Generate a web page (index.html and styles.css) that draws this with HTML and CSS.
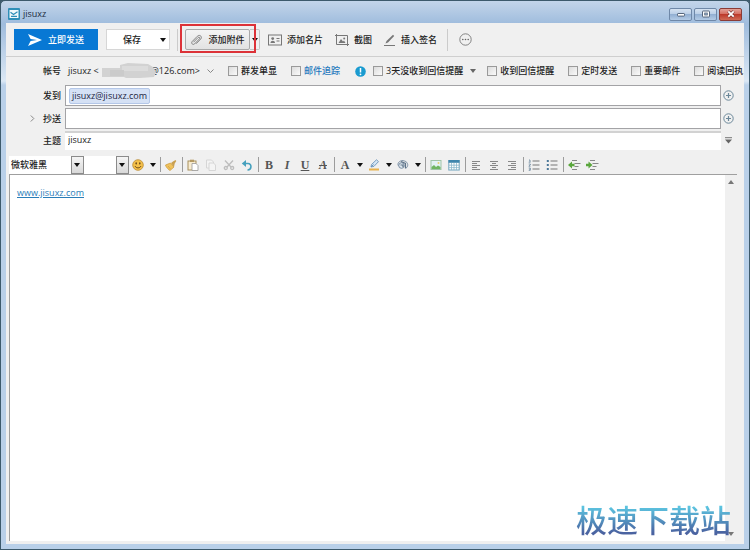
FILE: index.html
```html
<!DOCTYPE html>
<html lang="zh-CN">
<head>
    <meta charset="UTF-8">
    <title>jisuxz</title>
    <meta name="viewport" content="width=device-width, initial-scale=1">
    <link rel="stylesheet" href="styles.css">
</head>
<body>
    <div class="window">
        <header class="titlebar">
            <svg class="app-icon" width="12" height="12" viewBox="0 0 12 12">
                <rect width="12" height="12" rx="1" fill="#2f8fb8"/>
                <rect x="1.5" y="2" width="9" height="8" fill="#f2fafc"/>
                <path d="M2.5 4.2l3 2.3 4-2.8M3 8.4h6" fill="none" stroke="#2f8fb8" stroke-width="1.2"/>
            </svg>
            <h1>jisuxz</h1>
            <div class="win-buttons">
                <button class="win-btn" aria-label="最小化"><svg width="10" height="8" viewBox="0 0 10 8"><rect x="1.5" y="3.5" width="7" height="2.6" rx=".6" fill="#fff" stroke="#56667c"/></svg></button>
                <button class="win-btn" aria-label="最大化"><svg width="10" height="8" viewBox="0 0 10 8"><rect x="1.5" y="1" width="7" height="6" rx=".6" fill="#fff" stroke="#56667c"/><rect x="3.7" y="3" width="2.6" height="2" fill="#9db6d4" stroke="#56667c" stroke-width=".8"/></svg></button>
                <button class="win-btn close" aria-label="关闭"><svg width="10" height="8" viewBox="0 0 10 8"><path d="M2.3 1.3l5.4 5.4M7.7 1.3L2.3 6.7" stroke="#6b2a2a" stroke-width="3"/><path d="M2.3 1.3l5.4 5.4M7.7 1.3L2.3 6.7" stroke="#fff" stroke-width="1.9"/></svg></button>
            </div>
        </header>

        <main class="client">
            <div class="toolbar">
                <button class="btn-send">
                    <svg width="14" height="12" viewBox="0 0 14 12"><path d="M0 0l14 6-14 6 2.6-5L9 6 2.6 5z" fill="#fff"/></svg>
                    立即发送
                </button>
                <button class="btn-save"><span>保存</span><i class="caret"></i></button>
                <span class="tsep"></span>
                <div class="attach">
                    <button class="btn-attach">
                        <svg width="12" height="12" viewBox="0 0 12 12"><path d="M3.5 8.2l4.6-4.7c1-1 2.3.3 1.4 1.3L4.6 9.9C3 11.5.6 9.2 2.2 7.5l5.1-5.2C9.7-.1 12.8 2.8 10.6 5.2L6.2 9.7" fill="none" stroke="#777" stroke-width=".9"/></svg>
                        添加附件
                    </button>
                    <button class="btn-split" aria-label="更多附件"><i class="caret"></i></button>
                </div>
                <button class="tool">
                    <svg width="14" height="12" viewBox="0 0 14 12" fill="none" stroke="#777"><rect x=".5" y="1" width="13" height="10"/><path d="M8.5 4.5h3M8.5 7h3"/><path d="M2.5 9c0-3 4.5-3 4.5 0z" fill="#777" stroke="none"/><circle cx="4.7" cy="4.6" r="1.4" fill="#777" stroke="none"/></svg>
                    添加名片
                </button>
                <button class="tool">
                    <svg width="14" height="12" viewBox="0 0 14 12" fill="none" stroke="#777"><path d="M1.5 0v10.5H14M0 1.5h12.5V12"/><path d="M3.5 9l2.5-4 2 2.5 1-1 1.5 2.5z" fill="#777" stroke="none"/><circle cx="9.2" cy="4.5" r="1" fill="#777" stroke="none"/></svg>
                    截图
                </button>
                <button class="tool">
                    <svg width="12" height="12" viewBox="0 0 12 12" fill="none" stroke="#777"><path d="M0 11.5h11"/><path d="M1.5 9.5l1-2.5L9 .8l1.2 1.2L4 8.5z" fill="#777" stroke="none"/></svg>
                    插入签名
                </button>
                <span class="tsep"></span>
                <button class="tool" aria-label="更多">
                    <svg width="13" height="13" viewBox="0 0 13 13"><circle cx="6.5" cy="6.5" r="5.7" fill="none" stroke="#777" stroke-width=".9"/><g fill="#666"><circle cx="3.8" cy="6.5" r=".8"/><circle cx="6.5" cy="6.5" r=".8"/><circle cx="9.2" cy="6.5" r=".8"/></g></svg>
                </button>
            </div>

            <div class="options">
                <span class="row-label">帐号</span>
                <button class="account">
                    <span>jisuxz &lt;</span>
                    <svg class="blob" width="56" height="18" viewBox="0 0 56 18"><path d="M0 6h18V3l8-2 20 1 5 3 3 5-2 5-14 1H24l-2-1H0z" fill="#d2d2d2"/><path d="M20 4h26v5H20z" fill="#dcdcdc"/><path d="M8 8h14v6H8z" fill="#cbcbcb"/></svg>
                    <span>@126.com&gt;</span>
                    <svg class="chev" width="7" height="5" viewBox="0 0 7 5"><path d="M.5.5l3 3 3-3" fill="none" stroke="#888"/></svg>
                </button>
                <label class="check"><input type="checkbox">群发单显</label>
                <label class="check track"><input type="checkbox">邮件追踪</label>
                <svg class="info" width="11" height="11" viewBox="0 0 11 11"><circle cx="5.5" cy="5.5" r="5.3" fill="#1a9bd0"/><path d="M5.5 2v4.5" stroke="#fff" stroke-width="1.5"/><circle cx="5.5" cy="8.3" r=".9" fill="#fff"/></svg>
                <label class="check remind"><input type="checkbox">3天没收到回信提醒</label>
                <i class="caret soft"></i>
                <label class="check"><input type="checkbox">收到回信提醒</label>
                <label class="check"><input type="checkbox">定时发送</label>
                <label class="check"><input type="checkbox">重要邮件</label>
                <label class="check"><input type="checkbox">阅读回执</label>
            </div>

            <div class="fields">
                <div class="field">
                    <label class="row-label" for="to">发到</label>
                    <div class="box">
                        <span class="chip">jisuxz@jisuxz.com</span>
                        <input id="to" type="text">
                    </div>
                    <button class="side" aria-label="添加收件人"><svg width="11" height="11" viewBox="0 0 11 11" fill="none" stroke="#6b8799"><circle cx="5.5" cy="5.5" r="4.7"/><path d="M5.5 3v5M3 5.5h5" stroke-width="1.2"/></svg></button>
                </div>
                <div class="field">
                    <label class="row-label" for="cc"><svg width="5" height="7" viewBox="0 0 5 7"><path d="M.8.5l3 3-3 3" fill="none" stroke="#888"/></svg>抄送</label>
                    <div class="box"><input id="cc" type="text"></div>
                    <button class="side" aria-label="添加抄送人"><svg width="11" height="11" viewBox="0 0 11 11" fill="none" stroke="#6b8799"><circle cx="5.5" cy="5.5" r="4.7"/><path d="M5.5 3v5M3 5.5h5" stroke-width="1.2"/></svg></button>
                </div>
                <div class="field subject">
                    <label class="row-label" for="subject">主题</label>
                    <div class="box"><input id="subject" type="text" value="jisuxz"></div>
                    <button class="side" aria-label="展开"><svg width="9" height="7" viewBox="0 0 9 7"><path d="M1 .7h7" stroke="#777"/><path d="M1 2.5h7L4.5 6.5z" fill="#666"/></svg></button>
                </div>
            </div>

            <div class="format-bar">
                <span class="combo font"><select aria-label="字体"><option>微软雅黑</option></select></span>
                <span class="combo size"><select aria-label="字号"><option></option></select></span>
                <button class="fmt" aria-label="表情"><svg width="12" height="12" viewBox="0 0 12 12"><circle cx="6" cy="6" r="5.3" fill="#f4c04a" stroke="#b98a35" stroke-width=".8"/><ellipse cx="4.2" cy="4.4" rx=".8" ry="1.1" fill="#6b4a1a"/><ellipse cx="7.8" cy="4.4" rx=".8" ry="1.1" fill="#6b4a1a"/><path d="M3 7c1 2.5 5 2.5 6 0" fill="none" stroke="#6b4a1a"/></svg></button>
                <button class="drop" aria-label="更多表情"><i class="caret"></i></button>
                <span class="fsep"></span>
                <button class="fmt" aria-label="格式刷"><svg width="12" height="12" viewBox="0 0 12 12"><path d="M.5 6l5-2 3.5 4-4 3.5c-1-.5-4-3-4.5-5.5z" fill="#f0c35c" stroke="#c9963a" stroke-width=".7"/><path d="M6 4l2-1.5L10.5 1l.8 1-1.6 2.5L9 8z" fill="#c9a050"/><path d="M3 7l2.5 3" stroke="#c9963a" stroke-width=".6"/></svg></button>
                <span class="fsep"></span>
                <button class="fmt" aria-label="粘贴"><svg width="12" height="12" viewBox="0 0 12 12"><rect x="1" y="2" width="8" height="9" fill="#f8ecd0" stroke="#a8905c"/><rect x="3" y=".7" width="4" height="2.3" fill="#b59a62"/><path d="M5 4.5h4l2 2v5H5z" fill="#fff" stroke="#999" stroke-width=".8"/></svg></button>
                <button class="fmt" aria-label="复制"><svg width="12" height="12" viewBox="0 0 12 12" fill="#f4f4f4" stroke="#d6d6d6"><path d="M1.5 1h5l2 2v6h-7z"/><path d="M4 4h4.5l2 2v5.5H4z"/></svg></button>
                <button class="fmt" aria-label="剪切"><svg width="12" height="12" viewBox="0 0 12 12" fill="none" stroke="#bdbdbd" stroke-width="1.3"><path d="M2 1.5l6 6.5M10 1.5L4 8"/><circle cx="2.8" cy="9" r="1.5"/><circle cx="9.2" cy="9" r="1.5"/></svg></button>
                <button class="fmt" aria-label="撤销"><svg width="12" height="12" viewBox="0 0 12 12"><path d="M3 4.5h4c4 0 4 6.5-.5 6.5" fill="none" stroke="#45a0bd" stroke-width="1.6"/><path d="M.8 4.5L5 1v7z" fill="#45a0bd"/></svg></button>
                <span class="fsep"></span>
                <button class="fmt letter bold">B</button>
                <button class="fmt letter italic">I</button>
                <button class="fmt letter under">U</button>
                <button class="fmt letter strike">A</button>
                <span class="fsep"></span>
                <button class="fmt letter color">A</button>
                <button class="drop" aria-label="文字颜色"><i class="caret"></i></button>
                <button class="fmt" aria-label="突出显示"><svg width="12" height="12" viewBox="0 0 12 12"><path d="M3 8l.5-2.5L8.5.8l2 1.8L6 7.3z" fill="#d5e6f5" stroke="#6c94ba" stroke-width=".9"/><path d="M3 8l2.5-2.5" stroke="#6c94ba"/><path d="M1 10.5h10" stroke="#e9b24c" stroke-width="2"/></svg></button>
                <button class="drop" aria-label="突出显示颜色"><i class="caret"></i></button>
                <button class="fmt" aria-label="背景"><svg width="12" height="12" viewBox="0 0 12 12" fill="none" stroke="#778ca2"><path d="M1.5 7C-.5 3.5 4 .5 7.5 2c4 1 4 6 1.5 7"/><circle cx="4.5" cy="6.5" r="2.8" fill="#dfe8ef"/><path d="M4 2.5l4.5 2v5M3.5 6h2.5v2" stroke="#5e7388" stroke-width="1.2"/></svg></button>
                <button class="drop" aria-label="背景颜色"><i class="caret"></i></button>
                <span class="fsep"></span>
                <button class="fmt" aria-label="图片"><svg width="12" height="12" viewBox="0 0 12 12"><rect x="1" y="1.5" width="10" height="9" fill="#e3f2f5" stroke="#9fc4a8"/><path d="M1.5 10V8l2.5-2 2 2 2-1.5 2.5 1.5v2z" fill="#6fb662"/><circle cx="8.5" cy="4" r="1" fill="#e6cf6a"/></svg></button>
                <button class="fmt" aria-label="表格"><svg width="12" height="12" viewBox="0 0 12 12"><rect x=".8" y="1.5" width="10.4" height="9.5" fill="#fff" stroke="#6fa3bd"/><path d="M.5 1h11v2.8H.5z" fill="#3f86ad"/><path d="M1 6.2h10M1 8.6h10M3.5 4v7M6 4v7M8.5 4v7" stroke="#8ab8cc" stroke-width=".8"/></svg></button>
                <span class="fsep"></span>
                <button class="fmt" aria-label="左对齐"><svg width="10" height="10" viewBox="0 0 10 10"><path d="M1 1.5h8M1 3.5h5M1 5.5h8M1 7.5h5M1 9.5h8" stroke="#888"/></svg></button>
                <button class="fmt" aria-label="居中"><svg width="10" height="10" viewBox="0 0 10 10"><path d="M1 1.5h8M3 3.5h4M1 5.5h8M3 7.5h4M1 9.5h8" stroke="#888"/></svg></button>
                <button class="fmt" aria-label="右对齐"><svg width="10" height="10" viewBox="0 0 10 10"><path d="M1 1.5h8M4 3.5h5M1 5.5h8M4 7.5h5M1 9.5h8" stroke="#888"/></svg></button>
                <span class="fsep"></span>
                <button class="fmt" aria-label="编号列表"><svg width="12" height="12" viewBox="0 0 12 12"><path d="M4.5 2h7M4.5 6h7M4.5 10h7" stroke="#777" stroke-width="1.2"/><path d="M1 1h1v2M.7 3.2h1.8M.7 5h1.6v1L.8 7.2h1.7M.7 9h1.6v2.3H.7M1.2 10.2h1" fill="none" stroke="#66839a" stroke-width=".8"/></svg></button>
                <button class="fmt" aria-label="项目列表"><svg width="12" height="12" viewBox="0 0 12 12"><path d="M4.5 2h7M4.5 6h7M4.5 10h7" stroke="#777" stroke-width="1.2"/><path d="M.8 1h2v2h-2zM.8 5h2v2h-2zM.8 9h2v2h-2z" fill="#4c7899"/></svg></button>
                <span class="fsep"></span>
                <button class="fmt" aria-label="减少缩进"><svg width="14" height="12" viewBox="0 0 14 12"><path d="M5 1.5h5M7.5 4.5h6M7.5 7.5h4M5 10.5h5" stroke="#888"/><path d="M1 6l4-3.5v2.3h2.5v2.4H5v2.3z" fill="#5aa63c"/></svg></button>
                <button class="fmt" aria-label="增加缩进"><svg width="14" height="12" viewBox="0 0 14 12"><path d="M5 1.5h5M7.5 4.5h6M7.5 7.5h4M5 10.5h5" stroke="#888"/><path d="M7.5 6l-4-3.5v2.3H1v2.4h2.5v2.3z" fill="#5aa63c"/></svg></button>
            </div>

            <div class="editor">
                <div class="message"><a href="#">www.jisuxz.com</a></div>
                <div class="scrollbar">
                    <i class="up"></i>
                    <i class="down"></i>
                </div>
            </div>
        </main>
        <div class="watermark">极速下载站</div>
    </div>
</body>
</html>
```

FILE: styles.css
```css
*, *::before, *::after {
    box-sizing: border-box;
}
body {
    margin: 0;
    font-family: "Open Sans", "Noto Sans CJK SC", sans-serif;
    font-size: 9px;
    line-height: 14px;
    color: #222;
    background: #3d5a6c;
}
button, input, select {
    font: inherit;
    color: inherit;
    margin: 0;
    padding: 0;
    border: 0;
    background: none;
    border-radius: 0;
}
svg {
    display: block;
    flex: none;
}

/* window frame */
.window {
    position: relative;
    display: flex;
    flex-direction: column;
    min-height: 100vh;
    padding: 0 5px 5px;
    border: 1px solid #3d5a6c;
    border-radius: 5px 5px 0 0;
    background: linear-gradient(#c3d5ea, #9fbcdd 23px, #dbe8f5 80px, #b9d0e9 84px, #b9d0e9);
}
.titlebar {
    display: flex;
    align-items: center;
    height: 22px;
    padding: 4px 2px 0 2px;
}
.titlebar h1 {
    flex: 1;
    margin: 0 0 0 3px;
    font-size: 9px;
    font-weight: 500;
    color: #1c2b40;
}
.win-buttons {
    display: flex;
    gap: 2px;
}
.win-btn {
    display: flex;
    align-items: center;
    justify-content: center;
    width: 23px;
    height: 13px;
    border: 1px solid #6f88a8;
    border-radius: 2px;
    background: linear-gradient(#d5e2f1, #b8cde6 50%, #93b0d3 50%, #b3cbe6);
}
.win-btn.close {
    border-color: #8b3b36;
    background: linear-gradient(#e2a299, #d4695b 50%, #bd3a2b 50%, #d06a55);
}
.client {
    display: flex;
    flex-direction: column;
    flex: 1;
    min-width: 0;
    overflow: hidden;
    background: #f0f0f0;
}

.caret {
    display: block;
    flex: none;
    border: 3px solid transparent;
    border-top: 4px solid #111;
    border-bottom: 0;
}

/* main toolbar */
.toolbar {
    display: flex;
    align-items: center;
    height: 34px;
    padding: 0 8px;
    border-bottom: 1px solid #cfcfcf;
    font-weight: 500;
}
.btn-send {
    display: flex;
    align-items: center;
    justify-content: center;
    gap: 6px;
    width: 84px;
    height: 21px;
    background: #0878d4;
    color: #fff;
}
.btn-save {
    display: flex;
    align-items: center;
    width: 64px;
    height: 21px;
    margin-left: 8px;
    padding: 0 3px 0 0;
    border: 1px solid #d6d6d6;
    background: #fff;
}
.btn-save span {
    flex: 1;
    padding-right: 3px;
}
.tsep {
    width: 1px;
    height: 22px;
    margin: 0 7px;
    background: #cbcbcb;
}
.attach {
    position: relative;
    display: flex;
    height: 21px;
    margin-right: 8px;
}
/* highlight frame round the attach button */
.attach::after {
    content: "";
    position: absolute;
    left: -5px;
    top: -5px;
    width: 76px;
    height: 29px;
    border: 2px solid #dc3238;
    pointer-events: none;
}
.btn-attach {
    display: flex;
    align-items: center;
    justify-content: center;
    gap: 6px;
    width: 65px;
    border: 1px solid #a9a9a9;
    border-radius: 2px;
    background: linear-gradient(#f4f4f4, #e2e2e2);
}
.btn-split {
    display: flex;
    align-items: center;
    justify-content: center;
    width: 10px;
    border: 1px solid #c4c4c4;
    border-left: 0;
    border-radius: 0 2px 2px 0;
}
.tool {
    display: flex;
    align-items: center;
    gap: 5px;
    margin-right: 12px;
}
.tool + .tsep {
    margin: 0 11px 0 -2px;
}

/* account and option row */
.options {
    display: flex;
    align-items: center;
    height: 28px;
    white-space: nowrap;
    font-weight: 500;
}
.row-label {
    display: flex;
    align-items: center;
    justify-content: flex-end;
    gap: 8px;
    flex: none;
    width: 55px;
    font-weight: 500;
}
.account {
    display: flex;
    align-items: center;
    flex: none;
    width: 146px;
    margin: 0 14px 0 7px;
}
.blob {
    position: relative;
    margin: 0 -7px 0 3px;
}
.chev {
    margin-left: auto;
}
.check {
    display: flex;
    align-items: center;
    flex: none;
    gap: 3px;
    margin-right: 14px;
}
.check:last-child {
    margin-right: 0;
}
.check input {
    appearance: none;
    flex: none;
    width: 10px;
    height: 10px;
    border: 1px solid #9a9a9a;
    background: linear-gradient(135deg, #dcdcdc, #fafafa);
}
.check input:checked {
    background: #0878d4;
}
.check.track {
    color: #1f78bd;
}
.info {
    margin: 0 7px 0 1px;
}
.check.remind {
    margin-right: 7px;
}
.caret.soft {
    margin-right: 11px;
    border-top-color: #666;
}

/* address fields */
.fields {
    display: grid;
    gap: 2px;
}
.field {
    display: flex;
    align-items: center;
    height: 21px;
}
.box {
    display: flex;
    align-items: center;
    flex: 1;
    height: 21px;
    margin-left: 4px;
    padding-left: 3px;
    border: 1px solid #a3a3a6;
    background: #fff;
}
.box input {
    flex: 1;
    min-width: 0;
    height: 14px;
    outline: 0;
}
.subject {
    height: 19px;
}
.subject .box {
    align-items: flex-start;
    height: 19px;
    border: 0;
    border-top: 2px solid #d2d2d2;
}
.chip {
    padding: 0 2px;
    border: 1px solid #b4c7e8;
    border-radius: 2px;
    background: #d5e1f5;
    color: #1c2440;
}
.side {
    display: flex;
    justify-content: center;
    width: 15px;
    margin-right: 8px;
}

/* formatting bar */
.format-bar {
    display: flex;
    align-items: center;
    height: 19px;
    margin: 5px 0 0 3px;
}
.combo {
    position: relative;
    height: 18px;
    background: #fff;
}
.combo::before {
    content: "";
    position: absolute;
    right: 0;
    top: 0;
    width: 13px;
    height: 18px;
    border: 1px solid #8b8b8b;
    background: linear-gradient(#f5f5f5, #d8d8d8);
    pointer-events: none;
}
.combo::after {
    content: "";
    position: absolute;
    right: 4px;
    top: 7px;
    border: 3px solid transparent;
    border-top: 4px solid #111;
    border-bottom: 0;
    pointer-events: none;
}
.combo select {
    appearance: none;
    width: 100%;
    height: 18px;
    padding-left: 2px;
    font-weight: 500;
}
.combo.font {
    width: 75px;
}
.combo.size {
    width: 45px;
}
.fmt {
    display: flex;
    align-items: center;
    justify-content: center;
    width: 18px;
    height: 18px;
}
.drop {
    display: flex;
    align-items: center;
    justify-content: center;
    width: 11px;
    height: 18px;
}
.fsep {
    width: 1px;
    height: 15px;
    margin: 0 1px 0 2px;
    background: #9c9c9c;
}
.letter {
    font-family: "Liberation Serif", serif;
    font-size: 12px;
    font-weight: bold;
    color: #555;
}
.italic {
    font-style: italic;
}
.under {
    text-decoration: underline;
}
.strike {
    font-style: italic;
    text-decoration: line-through;
}

/* message body */
.editor {
    display: flex;
    flex: 1;
    margin: 0 7px 3px 3px;
    border-top: 1px solid #9f9f9f;
    border-left: 1px solid #9f9f9f;
    background: #fff;
}
.message {
    flex: 1;
    padding: 11px 7px;
}
.message a {
    color: #2a7db8;
}
.scrollbar {
    display: flex;
    flex-direction: column;
    justify-content: space-between;
    align-items: center;
    width: 12px;
    padding: 5px 0;
    background: #f0f0f0;
}
.up, .down {
    border: 3px solid transparent;
}
.up {
    border-top: 0;
    border-bottom: 4px solid #777;
}
.down {
    border-bottom: 0;
    border-top: 4px solid #777;
}

.watermark {
    position: absolute;
    right: 18px;
    bottom: 10px;
    font-family: "Noto Sans CJK SC", sans-serif;
    font-size: 31px;
    line-height: 40px;
    font-weight: 500;
    color: transparent;
    background: linear-gradient(#5cc4e0 20%, #4a62a0 85%);
    -webkit-background-clip: text;
    background-clip: text;
}
```
